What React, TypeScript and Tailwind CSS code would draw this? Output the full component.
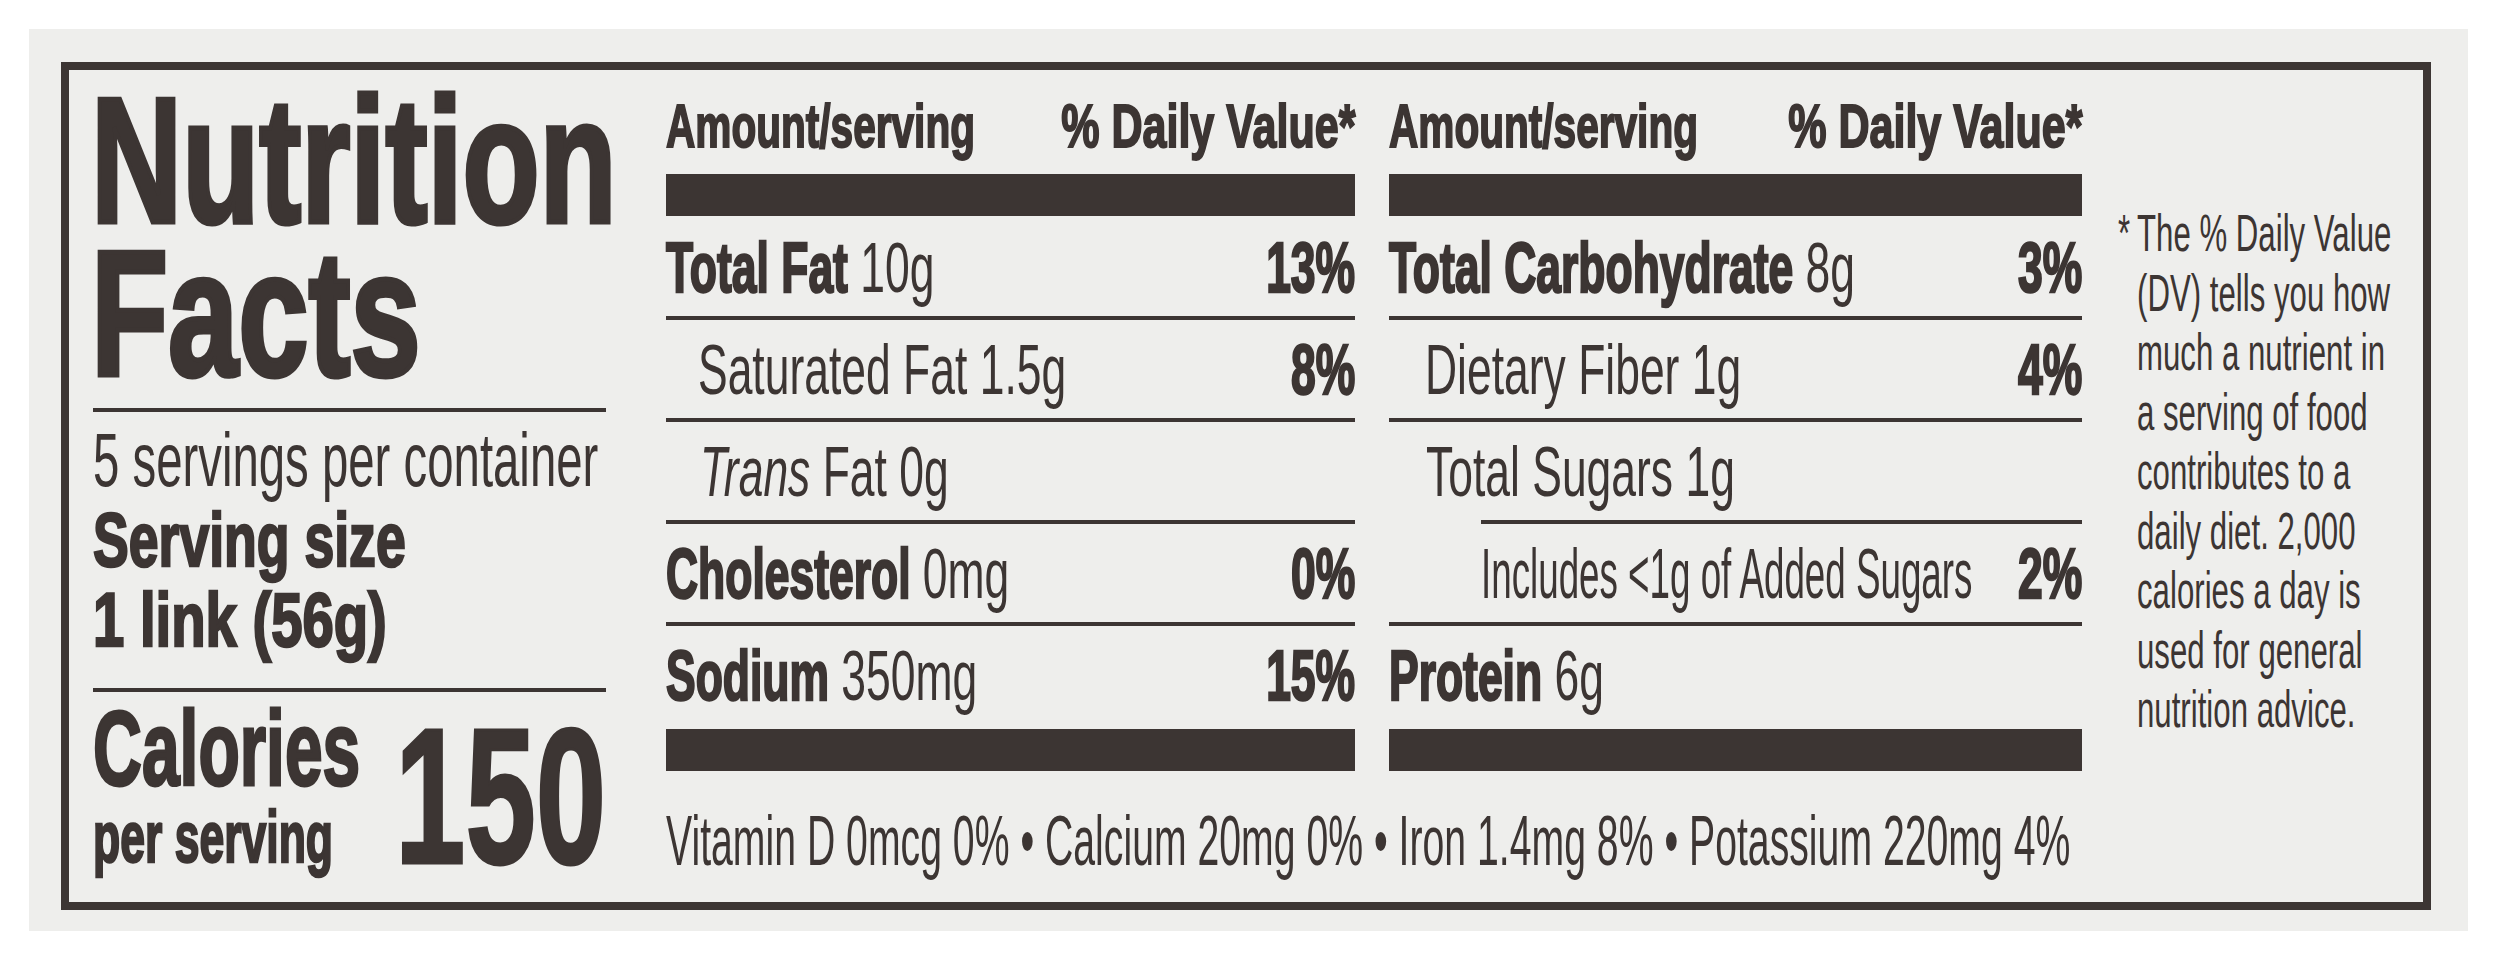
import React from 'react';

// the label face is a very condensed Helvetica; Arial-metric text is squeezed with scale-x to match widths
type SqProps = {
  children: React.ReactNode;
  scale: string;
  right?: boolean;
  className?: string;
};

const Sq: React.FC<SqProps> = ({ children, scale, right, className = '' }) => (
  <span className={`inline-block whitespace-nowrap ${right ? 'origin-right' : 'origin-left'} ${scale} ${className}`}>
    {children}
  </span>
);

const heavy = 'font-bold [-webkit-text-stroke:2.5px_#3c3533]';

const Rule = () => <div className="h-[4px] bg-[#3c3533]" />;
const Bar = () => <div className="h-[42px] bg-[#3c3533]" />;

interface RowProps {
  children: React.ReactNode;
  dv?: string;
  className: string;
  sq?: string;
}

const Row: React.FC<RowProps> = ({ children, dv, className, sq = 'scale-x-[0.635]' }) => (
  <div className={`flex items-start text-[70px] leading-none ${className}`}>
    <div className="min-w-0 flex-1">
      <Sq scale={sq}>{children}</Sq>
    </div>
    {dv && (
      <div className="shrink-0">
        <Sq right scale="scale-x-[0.635]" className={heavy}>{dv}</Sq>
      </div>
    )}
  </div>
);

const Header = () => (
  <div className="mt-[25px] flex items-start text-[61.5px] leading-none font-bold [-webkit-text-stroke:2px_#3c3533]">
    <div className="min-w-0 flex-1">
      <Sq scale="scale-x-[0.66]">Amount/serving</Sq>
    </div>
    <div className="shrink-0">
      <Sq right scale="scale-x-[0.70]">% Daily Value*</Sq>
    </div>
  </div>
);

const footnote = [
  'The % Daily Value',
  '(DV) tells you how',
  'much a nutrient in',
  'a serving of food',
  'contributes to a',
  'daily diet. 2,000',
  'calories a day is',
  'used for general',
  'nutrition advice.',
];

export default function App() {
  return (
    <div className="h-[962px] w-[2500px] overflow-hidden bg-white pl-[29px] pt-[29px] font-['Liberation_Sans',Arial,sans-serif] text-[#3c3533]">
      <div className="h-[902px] w-[2439px] bg-[#eeeeec] pl-[32px] pt-[33px]">
        <div className="flex h-[848px] w-[2370px] overflow-hidden border-[8px] border-[#3c3533]">
          {/* left: title, servings, calories */}
          <div className="ml-[24px] w-[513px] shrink-0">
            <div className="-ml-[2px] mt-[14px] text-[179px] leading-[153px] font-bold [-webkit-text-stroke:5px_#3c3533]">
              <div><Sq scale="scale-x-[0.705]">Nutrition</Sq></div>
              <div><Sq scale="scale-x-[0.705]">Facts</Sq></div>
            </div>
            <div className="mt-[18px]"><Rule /></div>
            <div className="mt-[8px] text-[76px] leading-[80px]">
              <div><Sq scale="scale-x-[0.623]">5 servings per container</Sq></div>
              <div className={heavy}><Sq scale="scale-x-[0.705]">Serving size</Sq></div>
              <div className={heavy}><Sq scale="scale-x-[0.74]">1 link (56g)</Sq></div>
            </div>
            <div className="mt-[28px]"><Rule /></div>
            <div className="flex items-start">
              <div className="min-w-0 flex-1">
                <div className="mt-[4px] text-[105px] leading-none font-bold [-webkit-text-stroke:3px_#3c3533]">
                  <Sq scale="scale-x-[0.645]">Calories</Sq>
                </div>
                <div className="-mt-[1px] text-[73px] leading-none font-bold [-webkit-text-stroke:2.5px_#3c3533]">
                  <Sq scale="scale-x-[0.61]">per serving</Sq>
                </div>
              </div>
              <div className="mt-[8px] shrink-0 text-[193px] leading-none font-bold [-webkit-text-stroke:3px_#3c3533]">
                <Sq right scale="scale-x-[0.655]">150</Sq>
              </div>
            </div>
          </div>

          {/* middle: two nutrient columns and vitamins */}
          <div className="ml-[60px] w-[1416px] shrink-0">
            <div className="flex gap-[34px]">
              <div className="w-[689px]">
                <Header />
                <div className="mt-[17px]"><Bar /></div>
                <Row className="h-[100px] pt-[17px]" dv="13%">
                  <b className={heavy}>Total Fat</b> 10g
                </Row>
                <Rule />
                <Row className="h-[98px] pl-[32px] pt-[15px]" dv="8%">Saturated Fat 1.5g</Row>
                <Rule />
                <Row className="h-[98px] pl-[34px] pt-[15px]">
                  <i>Trans</i> Fat 0g
                </Row>
                <Rule />
                <Row className="h-[98px] pt-[15px]" dv="0%">
                  <b className={heavy}>Cholesterol</b> 0mg
                </Row>
                <Rule />
                <Row className="h-[103px] pt-[15px]" dv="15%">
                  <b className={heavy}>Sodium</b> 350mg
                </Row>
                <Bar />
              </div>
              <div className="w-[693px]">
                <Header />
                <div className="mt-[17px]"><Bar /></div>
                <Row className="h-[100px] pt-[17px]" dv="3%">
                  <b className={heavy}>Total Carbohydrate</b> 8g
                </Row>
                <Rule />
                <Row className="h-[98px] pl-[36px] pt-[15px]" dv="4%">Dietary Fiber 1g</Row>
                <Rule />
                <Row className="h-[98px] pl-[37px] pt-[15px]">Total Sugars 1g</Row>
                <div className="ml-[92px]"><Rule /></div>
                <Row className="h-[98px] pl-[92px] pt-[15px]" dv="2%" sq="scale-x-[0.525]">
                  Includes &lt;1g of Added Sugars
                </Row>
                <Rule />
                <Row className="h-[103px] pt-[15px]">
                  <b className={heavy}>Protein</b> 6g
                </Row>
                <Bar />
              </div>
            </div>
            <div className="mt-[35px] text-[70px] leading-none">
              <Sq scale="scale-x-[0.56]">
                Vitamin D 0mcg 0% • Calcium 20mg 0% • Iron 1.4mg 8% • Potassium 220mg 4%
              </Sq>
            </div>
          </div>

          {/* right: footnote */}
          <div className="ml-[36px] mt-[134px] flex min-w-0 items-start text-[52px] leading-[59.5px]">
            <div className="w-[19px] shrink-0">
              <Sq scale="scale-x-[0.6]">*</Sq>
            </div>
            <div className="min-w-0">
              {footnote.map(line => (
                <div key={line}>
                  <Sq scale="scale-x-[0.6]">{line}</Sq>
                </div>
              ))}
            </div>
          </div>
        </div>
      </div>
    </div>
  );
}
